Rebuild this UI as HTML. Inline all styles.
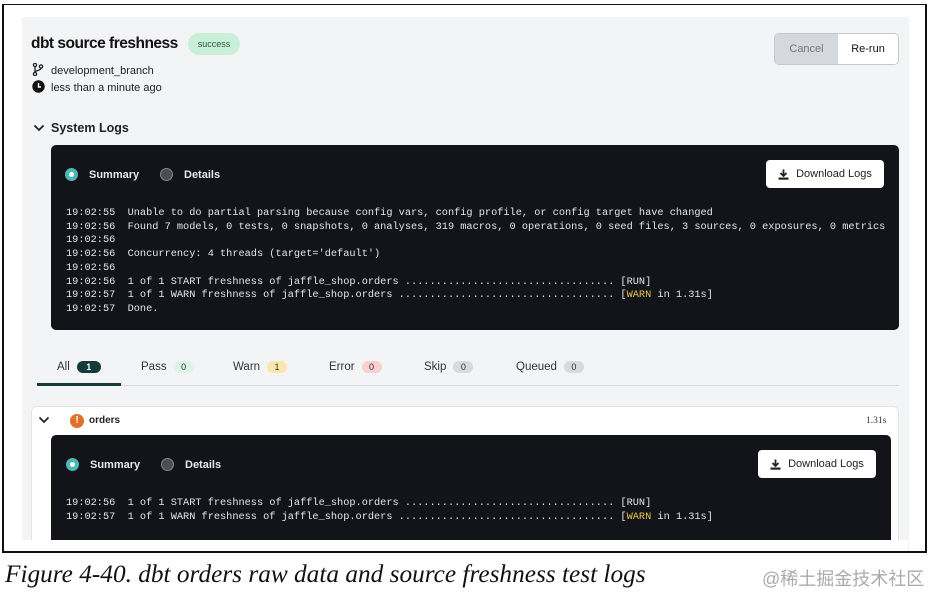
<!DOCTYPE html>
<html><head><meta charset="utf-8"><style>
*{margin:0;padding:0;box-sizing:border-box}
body{width:930px;height:592px;background:#fff;position:relative;overflow:hidden;font-family:"Liberation Sans",sans-serif;color:#1b1f24}
.a{position:absolute}
.frame{left:2px;top:4px;width:925px;height:549px;border:1.5px solid #111;overflow:hidden}
.panel{left:21px;top:13px;width:887px;height:540px;background:#f3f4f6}
.dark{background:#121419;border-radius:5px}
.mono{font-family:"Liberation Mono",monospace;font-size:10.28px;color:#e6e6e6;white-space:pre;line-height:13.7px}
.rad{width:13px;height:13px;border-radius:50%}
.lbl{font-size:11px;font-weight:bold;color:#e8e8e8}
.btn{background:#fff;border-radius:4px;font-size:11px;color:#222;display:flex;align-items:center;justify-content:center;gap:7px}
.tab{font-size:11.5px;color:#333;top:361px}
.pill{display:inline-block;border-radius:8px;font-size:9px;padding:1px 0;width:20px;text-align:center;margin-left:7px}
.y{color:#e8c54a}
</style></head><body>
<div class="a frame">
<div class="a panel" style="left:19px;top:12px"></div>
</div>
<div class="a" style="left:31px;top:35px;font-size:15.5px;font-weight:bold;color:#111;letter-spacing:-0.5px">dbt source freshness</div>
<div class="a" style="left:188px;top:33px;width:52px;height:22px;border-radius:11px;background:#c9efd9;font-size:9px;color:#2a5b3d;text-align:center;line-height:22px">success</div>
<svg class="a" style="left:32px;top:63px" width="12" height="13" viewBox="0 0 12 13"><circle cx="3" cy="2" r="1.6" fill="none" stroke="#222" stroke-width="1.3"/><circle cx="3" cy="11" r="1.6" fill="none" stroke="#222" stroke-width="1.3"/><circle cx="9" cy="3.5" r="1.6" fill="none" stroke="#222" stroke-width="1.3"/><path d="M3 3.6V9.4M9 5C9 8 3 7 3 9.4" fill="none" stroke="#222" stroke-width="1.3"/></svg>
<div class="a" style="left:51px;top:65px;font-size:11px;color:#222">development_branch</div>
<svg class="a" style="left:32px;top:80px" width="13" height="13" viewBox="0 0 13 13"><circle cx="6.5" cy="6.5" r="6.2" fill="#111"/><path d="M6.5 3V7H9" stroke="#fff" stroke-width="1.4" fill="none"/></svg>
<div class="a" style="left:51px;top:82px;font-size:11px;color:#222">less than a minute ago</div>
<div class="a" style="left:774px;top:33px;width:125px;height:32px;border:1px solid #c4c8ce;border-radius:5px;overflow:hidden;display:flex;font-size:11px">
<div style="width:63px;background:#d5d8dd;color:#777;text-align:center;line-height:30px">Cancel</div>
<div style="flex:1;background:#fff;color:#111;text-align:center;line-height:30px">Re-run</div></div>
<svg class="a" style="left:33px;top:123px" width="12" height="10" viewBox="0 0 12 10"><path d="M1.5 2.5L6 7L10.5 2.5" stroke="#222" stroke-width="1.8" fill="none"/></svg>
<div class="a" style="left:51px;top:121px;font-size:12.5px;font-weight:bold;color:#222">System Logs</div>

<div class="a dark" style="left:51px;top:145px;width:848px;height:185px"></div>
<div class="a rad" style="left:65px;top:168px;background:#4bb8b4;border:3px solid #4bb8b4"><div style="width:5px;height:5px;background:#fff;border-radius:50%;margin:1px"></div></div>
<div class="a lbl" style="left:89px;top:169px">Summary</div>
<div class="a rad" style="left:160px;top:168px;background:#4a4d55;border:1px solid #888"></div>
<div class="a lbl" style="left:184px;top:169px">Details</div>
<div class="a btn" style="left:766px;top:160px;width:118px;height:28px"><svg width="11" height="11" viewBox="0 0 11 11"><path d="M5.5 0.5V6.5M2.5 4L5.5 7L8.5 4" stroke="#222" stroke-width="1.8" fill="none"/><rect x="0.5" y="8.5" width="10" height="2.2" fill="#222"/></svg>Download Logs</div>
<div class="a mono" style="left:66px;top:207px">19:02:55  Unable to do partial parsing because config vars, config profile, or config target have changed
19:02:56  Found 7 models, 0 tests, 0 snapshots, 0 analyses, 319 macros, 0 operations, 0 seed files, 3 sources, 0 exposures, 0 metrics
19:02:56
19:02:56  Concurrency: 4 threads (target='default')
19:02:56
19:02:56  1 of 1 START freshness of jaffle_shop.orders .................................. [RUN]
19:02:57  1 of 1 WARN freshness of jaffle_shop.orders ................................... [<span class="y">WARN</span> in 1.31s]
19:02:57  Done.</div>

<div class="a tab" style="left:57px">All<span class="pill" style="background:#143b3b;color:#fff;font-weight:bold;width:24px">1</span></div>
<div class="a tab" style="left:141px">Pass<span class="pill" style="background:#dcf3e6;color:#333">0</span></div>
<div class="a tab" style="left:233px">Warn<span class="pill" style="background:#fbe7ad;color:#333">1</span></div>
<div class="a tab" style="left:329px">Error<span class="pill" style="background:#f9d0d0;color:#333">0</span></div>
<div class="a tab" style="left:424px">Skip<span class="pill" style="background:#d7d9dd;color:#333">0</span></div>
<div class="a tab" style="left:516px">Queued<span class="pill" style="background:#d7d9dd;color:#333">0</span></div>
<div class="a" style="left:37px;top:385px;width:862px;height:1px;background:#d8dadf"></div>
<div class="a" style="left:37px;top:383px;width:84px;height:3px;background:#143b3b"></div>

<div class="a" style="left:31px;top:406px;width:868px;height:140px;background:#fff;border:1px solid #e2e4e8;border-radius:6px"></div>
<svg class="a" style="left:38px;top:415px" width="12" height="10" viewBox="0 0 12 10"><path d="M1.5 2.5L6 7L10.5 2.5" stroke="#222" stroke-width="1.8" fill="none"/></svg>
<div class="a" style="left:70px;top:414px;width:14px;height:14px;border-radius:50%;background:#e0712c;color:#fff;font-size:10px;font-weight:bold;text-align:center;line-height:14px">!</div>
<div class="a" style="left:89px;top:415px;font-size:10px;font-weight:bold;color:#222">orders</div>
<div class="a" style="left:866px;top:416px;font-size:9.5px;color:#333;font-family:'Liberation Serif',serif">1.31s</div>
<div class="a dark" style="left:51px;top:435px;width:840px;height:110px;border-radius:5px 5px 0 0"></div>
<div class="a rad" style="left:66px;top:458px;background:#4bb8b4;border:3px solid #4bb8b4"><div style="width:5px;height:5px;background:#fff;border-radius:50%;margin:1px"></div></div>
<div class="a lbl" style="left:90px;top:459px">Summary</div>
<div class="a rad" style="left:161px;top:458px;background:#4a4d55;border:1px solid #888"></div>
<div class="a lbl" style="left:185px;top:459px">Details</div>
<div class="a btn" style="left:758px;top:450px;width:118px;height:28px"><svg width="11" height="11" viewBox="0 0 11 11"><path d="M5.5 0.5V6.5M2.5 4L5.5 7L8.5 4" stroke="#222" stroke-width="1.8" fill="none"/><rect x="0.5" y="8.5" width="10" height="2.2" fill="#222"/></svg>Download Logs</div>
<div class="a mono" style="left:66px;top:497px">19:02:56  1 of 1 START freshness of jaffle_shop.orders .................................. [RUN]
19:02:57  1 of 1 WARN freshness of jaffle_shop.orders ................................... [<span class="y">WARN</span> in 1.31s]</div>
<div class="a" style="left:21px;top:540px;width:887px;height:12px;background:#fff"></div>
<div class="a" style="left:2px;top:551px;width:925px;height:2px;background:#111"></div>
<div class="a" style="left:2px;top:4px;width:2px;height:549px;background:#111"></div>
<div class="a" style="left:925px;top:4px;width:2px;height:549px;background:#111"></div>

<div class="a" style="left:5px;top:560px;font-family:'Liberation Serif',serif;font-style:italic;font-size:25.3px;color:#111">Figure 4-40. dbt orders raw data and source freshness test logs</div>
<div class="a" style="left:762px;top:565px;font-family:'Liberation Sans','Noto Sans CJK SC',sans-serif;font-size:18px;color:#aaa">@稀土掘金技术社区</div>
</body></html>
